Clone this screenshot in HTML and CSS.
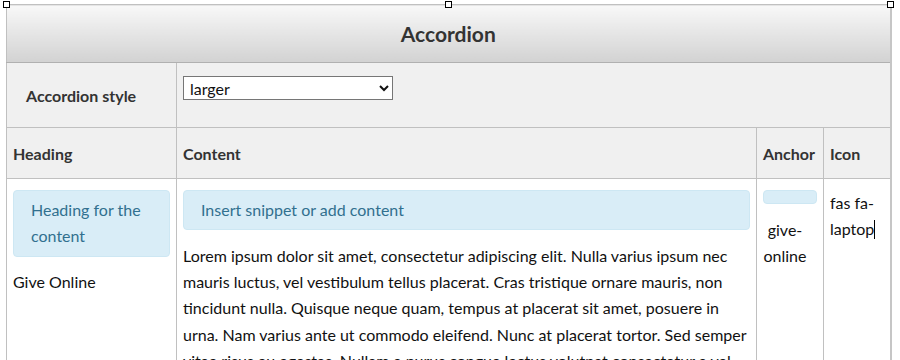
FILE: index.html
```html
<!DOCTYPE html>
<html>
<head>
<meta charset="utf-8">
<link rel="stylesheet" href="styles.css">
</head>
<body>
<div class="frame">
  <span class="handle h-left"></span>
  <span class="handle h-mid"></span>
  <span class="handle h-right"></span>
  <table class="grid">
    <colgroup>
      <col class="c-heading">
      <col class="c-content">
      <col class="c-anchor">
      <col class="c-icon">
    </colgroup>
    <tr class="title-row">
      <th class="title" colspan="4">Accordion</th>
    </tr>
    <tr class="settings">
      <td class="label">Accordion style</td>
      <td class="select-cell" colspan="3">
        <select class="style-select">
          <option>larger</option>
          <option>default</option>
        </select>
      </td>
    </tr>
    <tr class="heads">
      <td>Heading</td>
      <td>Content</td>
      <td>Anchor</td>
      <td>Icon</td>
    </tr>
    <tr class="body">
      <td>
        <div class="snip">Heading for the content</div>
        <div class="plain">Give Online</div>
      </td>
      <td>
        <div class="snip">Insert snippet or add content</div>
        <div class="plain">Lorem ipsum dolor sit amet, consectetur adipiscing elit. Nulla varius ipsum nec mauris luctus, vel vestibulum tellus placerat. Cras tristique ornare mauris, non tincidunt nulla. Quisque neque quam, tempus at placerat sit amet, posuere in urna. Nam varius ante ut commodo eleifend. Nunc at placerat tortor. Sed semper vitae risus eu egestas. Nullam a purus congue lectus volutpat consectetur a vel nisi. Integer sed tempor augue.</div>
      </td>
      <td>
        <div class="snip empty"></div>
        <div class="plain anchor-text">give-online</div>
      </td>
      <td class="icon-cell">fas fa-laptop<span class="caret"></span></td>
    </tr>
  </table>
</div>
</body>
</html>
```

FILE: styles.css
```css
html, body {
  margin: 0;
  padding: 0;
  background: #ffffff;
}

body {
  font-family: Lato, "Open Sans", Arial, sans-serif;
  color: #222;
}

.frame {
  position: relative;
  padding: 4px 0 0 6px;
}

.handle {
  position: absolute;
  top: 1px;
  width: 5px;
  height: 5px;
  background: #fff;
  border: 1px solid #000;
}
.h-left { left: 3px; }
.h-mid { left: 445px; }
.h-right { left: 887px; }

.grid {
  width: 884px;
  border-collapse: collapse;
  table-layout: fixed;
  border: 1px solid #c6c6c6;
  border-right: 2px solid #c6c6c6;
}

.c-heading { width: 170px; }
.c-content { width: 580px; }
.c-anchor { width: 67px; }
.c-icon { width: 67px; }

.grid td, .grid th {
  border: 1px solid #c0c0c0;
  padding: 0 6px;
  font-size: 16px;
}

.title-row { height: 58px; }

.grid .title {
  padding: 0;
  font-size: 21px;
  font-weight: bold;
  color: #333;
  text-align: center;
  vertical-align: middle;
  background: linear-gradient(#f8f8f8, #d2d2d2);
  border-bottom: 1px solid #b0b0b0;
}

.settings { height: 65px; }

.settings td {
  background: #f0f0f0;
}

.grid .settings .label {
  padding-left: 19px;
  font-weight: bold;
  color: #333;
  vertical-align: middle;
}

.grid .settings .select-cell {
  vertical-align: top;
  padding-top: 13px;
}

.style-select {
  width: 210px;
  height: 24px;
  font-family: Lato, "Open Sans", Arial, sans-serif;
  font-size: 16px;
  color: #111;
  background: #fff;
  border: 1px solid #767676;
  border-radius: 0;
  padding: 0 2px;
}

.heads { height: 51px; }

.heads td {
  background: #f0f0f0;
  font-weight: bold;
  color: #333;
  vertical-align: middle;
}

.grid .body td {
  vertical-align: top;
  padding-top: 11px;
  padding-bottom: 20px;
  line-height: 26.25px;
  color: #111;
}

.snip {
  background: #d9edf7;
  border: 1px solid #cde7f3;
  border-radius: 4px;
  padding: 6px 17px;
  color: #31708f;
}

.snip.empty {
  padding: 6px;
}

.plain {
  margin-top: 12.5px;
}

.anchor-text {
  text-align: center;
  padding-right: 10px;
}

.caret {
  display: inline-block;
  width: 1px;
  height: 19px;
  background: #000;
  vertical-align: -4px;
}
```
